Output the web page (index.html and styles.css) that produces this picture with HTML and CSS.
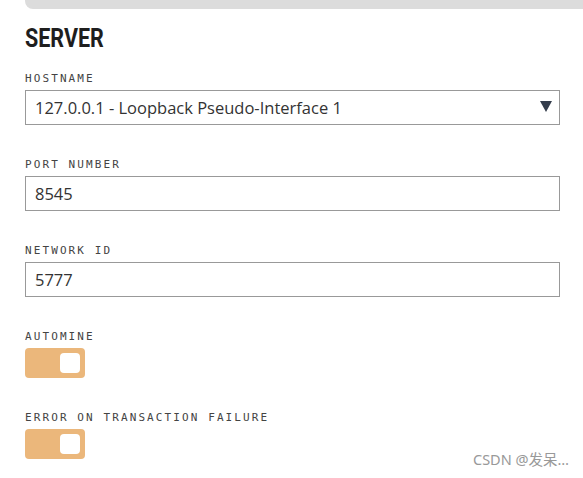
FILE: index.html
```html
<!DOCTYPE html>
<html lang="en">
<head>
    <meta charset="UTF-8">
    <meta name="viewport" content="width=device-width, initial-scale=1.0">
    <title>Server Settings</title>
    <link rel="stylesheet" href="styles.css">
</head>
<body>
    <div class="panel">
        <div class="topbar"></div>
        <h2 class="title"><span>SERVER</span></h2>

        <div class="field">
            <label for="hostname">HOSTNAME</label>
            <div class="select-wrap">
                <select id="hostname">
                    <option>127.0.0.1 - Loopback Pseudo-Interface 1</option>
                </select>
                <svg class="arrow" width="12" height="11" viewBox="0 0 12 11"><polygon points="0,0 12,0 6,11" fill="#343d4c"/></svg>
            </div>
        </div>

        <div class="field">
            <label for="port">PORT NUMBER</label>
            <input type="text" id="port" value="8545">
        </div>

        <div class="field">
            <label for="network">NETWORK ID</label>
            <input type="text" id="network" value="5777">
        </div>

        <div class="field">
            <label>AUTOMINE</label>
            <div class="toggle"><span class="knob"></span></div>
        </div>

        <div class="field">
            <label>ERROR ON TRANSACTION FAILURE</label>
            <div class="toggle"><span class="knob"></span></div>
        </div>
    </div>
    <div class="watermark">CSDN @发呆…</div>
</body>
</html>
```

FILE: styles.css
```css
body {
    margin: 0;
    background: #fff;
    font-family: 'Open Sans', 'Noto Sans', sans-serif;
    color: #333;
}
.panel {
    padding: 0 23px 0 25px;
}
.topbar {
    height: 9px;
    background: #dcdcdc;
    margin-right: -23px;
    border-bottom-left-radius: 8px;
}
.title {
    font-family: 'Roboto', sans-serif;
    font-weight: 700;
    font-size: 25px;
    line-height: 30px;
    margin: 15px 0 17px;
    color: #1e1e1e;
}
.title span {
    display: inline-block;
    transform: scaleX(0.86);
    transform-origin: left center;
}
.field {
    margin-bottom: 32px;
}
.field label {
    display: block;
    font-family: 'DejaVu Sans Mono', monospace;
    font-size: 11px;
    letter-spacing: 2.1px;
    line-height: 16px;
    color: #444;
    margin-bottom: 3px;
}
.select-wrap {
    position: relative;
}
.field select,
.field input {
    display: block;
    box-sizing: border-box;
    width: 100%;
    height: 35px;
    border: 1px solid #999;
    border-radius: 0;
    background: #fff;
    padding: 0 9px;
    font-family: 'Open Sans', 'Noto Sans', sans-serif;
    font-size: 16.5px;
    color: #333;
    appearance: none;
    -webkit-appearance: none;
    outline: none;
}
.arrow {
    position: absolute;
    right: 8px;
    top: 11px;
}
.toggle {
    width: 60px;
    height: 30px;
    box-sizing: border-box;
    padding: 5px;
    background: #ebb77b;
    border-radius: 4px;
    display: flex;
    justify-content: flex-end;
}
.knob {
    width: 20px;
    height: 20px;
    background: #fff;
    border-radius: 4px;
}
.watermark {
    position: absolute;
    right: 14px;
    bottom: 9px;
    font-family: 'Noto Sans', 'Noto Sans CJK SC', sans-serif;
    font-size: 14.5px;
    color: #999;
}
```
